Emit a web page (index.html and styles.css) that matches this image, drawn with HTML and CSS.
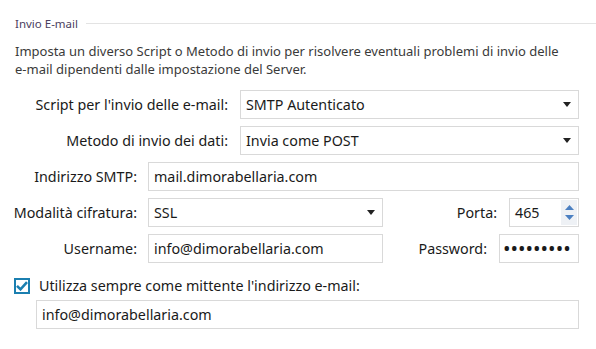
FILE: index.html
```html
<!DOCTYPE html>
<html lang="it">
<head>
    <meta charset="UTF-8">
    <title>Invio E-mail</title>
    <link rel="stylesheet" href="styles.css">
</head>
<body>
    <div class="group-title">
        <span>Invio E-mail</span>
        <div class="rule"></div>
    </div>

    <p class="hint">Imposta un diverso Script o Metodo di invio per risolvere eventuali problemi di invio delle<br>e-mail dipendenti dalle impostazione del Server.</p>

    <div class="row wide">
        <label class="lbl">Script per l'invio delle e-mail:</label>
        <div class="field select">
            <span>SMTP Autenticato</span>
            <svg width="8" height="5" viewBox="0 0 8 5"><path d="M0 0h8L4 5z" fill="#222"/></svg>
        </div>
    </div>

    <div class="row wide">
        <label class="lbl">Metodo di invio dei dati:</label>
        <div class="field select">
            <span>Invia come POST</span>
            <svg width="8" height="5" viewBox="0 0 8 5"><path d="M0 0h8L4 5z" fill="#222"/></svg>
        </div>
    </div>

    <div class="row">
        <label class="lbl">Indirizzo SMTP:</label>
        <input class="field" type="text" value="mail.dimorabellaria.com">
    </div>

    <div class="row">
        <label class="lbl">Modalità cifratura:</label>
        <div class="field select half">
            <span>SSL</span>
            <svg width="8" height="5" viewBox="0 0 8 5"><path d="M0 0h8L4 5z" fill="#222"/></svg>
        </div>
        <label class="lbl-side">Porta:</label>
        <div class="field spin">
            <span>465</span>
            <div class="spin-btns">
                <svg width="9" height="5" viewBox="0 0 9 5"><path d="M0 5h9L4.5 0z" fill="#4a7fc1"/></svg>
                <svg width="9" height="5" viewBox="0 0 9 5"><path d="M0 0h9L4.5 5z" fill="#4a7fc1"/></svg>
            </div>
        </div>
    </div>

    <div class="row">
        <label class="lbl">Username:</label>
        <input class="field half" type="text" value="info@dimorabellaria.com">
        <label class="lbl-side">Password:</label>
        <input class="field pwd" type="password" value="secret123">
    </div>

    <div class="check-row">
        <span class="checkbox">
            <svg width="12" height="10" viewBox="0 0 12 10"><path d="M1 4.8l3.5 3.5L11 1.2" fill="none" stroke="#1b7fb0" stroke-width="2.6"/></svg>
        </span>
        <span>Utilizza sempre come mittente l'indirizzo e-mail:</span>
    </div>

    <div class="sender">
        <input class="field" type="text" value="info@dimorabellaria.com">
    </div>
</body>
</html>
```

FILE: styles.css
```css
body {
    font-family: "Noto Sans", "Open Sans", sans-serif;
    font-size: 14.3px;
    color: #1a1a1a;
    background-color: #fff;
    margin: 0;
    padding: 16px 17px 0 15px;
}
.group-title {
    display: flex;
    align-items: center;
    gap: 8px;
    margin-right: -17px;
    font-size: 11.5px;
    color: #4b4060;
}
.rule {
    flex: 1;
    height: 1px;
    background-color: #e3e3e3;
}
.hint {
    font-size: 13px;
    line-height: 18px;
    color: #3a3a3a;
    margin: 11px 0 12px;
}
.row {
    display: flex;
    align-items: center;
    margin-bottom: 7px;
}
.lbl {
    display: flex;
    justify-content: flex-end;
    white-space: nowrap;
    width: 122px;
    margin-right: 11px;
    flex-shrink: 0;
}
.wide .lbl {
    width: 213px;
    margin-right: 12px;
}
.lbl-side {
    flex: 1;
    text-align: right;
    margin-right: 12px;
    white-space: nowrap;
}
.field {
    flex: 1;
    min-width: 0;
    box-sizing: border-box;
    height: 29px;
    border: 1px solid #d9d9d9;
    background-color: #fff;
    font-family: inherit;
    font-size: 14.3px;
    color: #1a1a1a;
    padding: 0 5px;
    outline: none;
}
.select {
    display: flex;
    align-items: center;
    justify-content: space-between;
    padding-right: 7px;
}
.half {
    flex: 0 0 235px;
    width: 235px;
}
.spin {
    flex: 0 0 70px;
    display: flex;
    align-items: center;
    justify-content: space-between;
    padding-right: 1px;
}
.spin-btns {
    display: flex;
    flex-direction: column;
    justify-content: center;
    align-items: center;
    gap: 5px;
    width: 16px;
    height: 25px;
    background-color: #eef1f5;
}
.pwd {
    flex: 0 0 80px;
    width: 80px;
    font-size: 20px;
    letter-spacing: 0;
    padding: 0 3px;
}
.check-row {
    display: flex;
    align-items: center;
    gap: 9px;
    margin: 13px 0 5px -1px;
}
.checkbox {
    box-sizing: border-box;
    width: 16px;
    height: 16px;
    border: 2px solid #1b7fb0;
    display: flex;
    align-items: center;
    justify-content: center;
}
.sender {
    display: flex;
    padding-left: 21px;
}
```
